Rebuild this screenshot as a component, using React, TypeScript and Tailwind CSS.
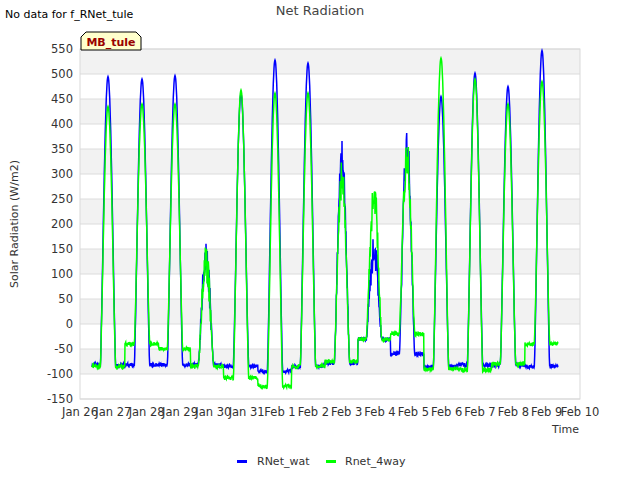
import React from "react";

const X0 = 80, X1 = 580, Y0 = 49, Y1 = 399;
const xd = (d: number) => X0 + (d * (X1 - X0)) / 15;
const yv = (v: number) => Y0 + ((550 - v) * (Y1 - Y0)) / 700;

const peaksX = [108, 142, 175, 206, 241, 275, 308, 342, 374, 407, 441, 475, 508, 542];
const blueP = [495, 490, 497, 130, 460, 528, 522, 328, 150, 355, 455, 502, 475, 547];
const greenP = [435, 440, 440, 125, 468, 462, 462, 290, 260, 335, 532, 490, 440, 485];
const blueN = [-82, -82, -82, -82, -85, -95, -85, -78, -30, -60, -85, -82, -82, -85];
const greenN = [-85, -40, -50, -85, -108, -125, -85, -75, -30, -20, -90, -92, -80, -40];

function rnd(i: number) {
  const s = Math.sin(i * 12.9898) * 43758.5453;
  return s - Math.floor(s);
}

function series(P: number[], N: number[], seed: number) {
  const pts: string[] = [];
  const start = (92 - X0) / 33.333, end = (558 - X0) / 33.333;
  let i = 0;
  for (let d = start; d <= end; d += 0.01) {
    i++;
    const x = xd(d);
    let k = 0;
    let best = 1e9;
    peaksX.forEach((px, j) => {
      const dd = Math.abs(px - x);
      if (dd < best) { best = dd; k = j; }
    });
    const pd = (x - peaksX[k]) / 33.333;
    const night = N[k] + (rnd(i + seed) - 0.5) * 8;
    let v = night;
    if (Math.abs(pd) < 0.23) {
      const c = Math.cos((pd / 0.23) * (Math.PI / 2));
      v = night + (P[k] - night) * Math.pow(c, 1.3);
      if (k === 3 || k === 7 || k === 8 || k === 9) v += (rnd(i * 3 + seed) - 0.5) * 80 * c;
    }
    pts.push(`${x.toFixed(1)},${yv(v).toFixed(1)}`);
  }
  return pts.join(" ");
}

const yTicks = [550, 500, 450, 400, 350, 300, 250, 200, 150, 100, 50, 0, -50, -100, -150];
const xLabels = ["Jan 26", "Jan 27", "Jan 28", "Jan 29", "Jan 30", "Jan 31", "Feb 1", "Feb 2", "Feb 3", "Feb 4", "Feb 5", "Feb 6", "Feb 7", "Feb 8", "Feb 9", "Feb 10"];

export default function App() {
  const font = { fontFamily: "'DejaVu Sans', sans-serif" };
  return (
    <div className="w-[640px] h-[480px] bg-white relative" style={font}>
      <svg width="640" height="480" className="absolute left-0 top-0">
        {yTicks.slice(0, -1).map((t, i) =>
          i % 2 === 0 ? (
            <rect key={t} x={X0} y={yv(t)} width={X1 - X0} height={25} fill="#f2f2f2" />
          ) : null
        )}
        {yTicks.map((t) => (
          <g key={t}>
            <line x1={X0} x2={X1} y1={yv(t)} y2={yv(t)} stroke="#dcdcdc" />
            <text x={73} y={yv(t) + 4} fontSize="11.5" textAnchor="end" fill="#333">{t}</text>
          </g>
        ))}
        <rect x={X0} y={Y0} width={X1 - X0} height={Y1 - Y0} fill="none" stroke="#d9d9d9" />
        {xLabels.map((l, i) => (
          <g key={l}>
            <text x={xd(i)} y={Y1 + 17} fontSize="11.5" textAnchor="middle" fill="#333">{l}</text>
          </g>
        ))}
        <polyline points={series(blueP, blueN, 1)} fill="none" stroke="#0000ff" strokeWidth="1.5" />
        <polyline points={series(greenP, greenN, 7)} fill="none" stroke="#00ff00" strokeWidth="1.5" />
        <text x={320} y={15} fontSize="13" textAnchor="middle" fill="#444">Net Radiation</text>
        <text x={5} y={18} fontSize="11" fill="#000">No data for f_RNet_tule</text>
        <text x={579} y={433} fontSize="11" textAnchor="end" fill="#333">Time</text>
        <text x={18} y={224} fontSize="11" textAnchor="middle" fill="#333" transform="rotate(-90 18 224)">Solar Radiation (W/m2)</text>
        <path d="M81,50 L81,37 L86,32 L136,32 L141,37 L141,50 Z" fill="#ffffcc" stroke="#000" />
        <text x={111} y={46} fontSize="11" fontWeight="bold" textAnchor="middle" fill="#990000">MB_tule</text>
        <rect x={237} y={460} width={10} height={3} fill="#0000ff" />
        <text x={257} y={465} fontSize="11" fill="#333">RNet_wat</text>
        <rect x={326} y={460} width={10} height={3} fill="#00ff00" />
        <text x={345} y={465} fontSize="11" fill="#333">Rnet_4way</text>
      </svg>
    </div>
  );
}
